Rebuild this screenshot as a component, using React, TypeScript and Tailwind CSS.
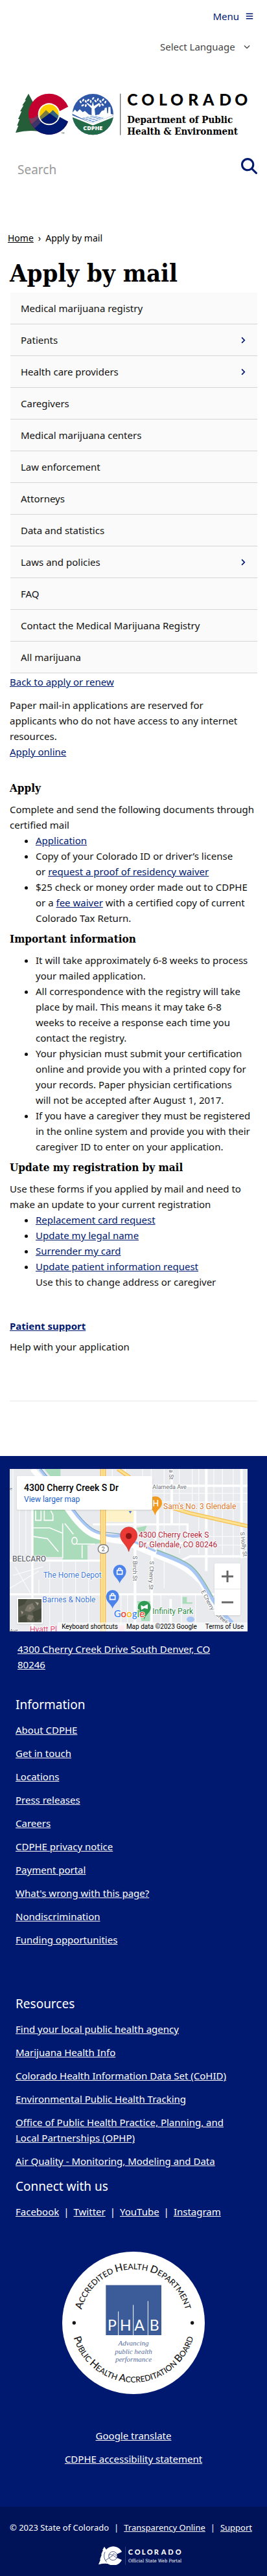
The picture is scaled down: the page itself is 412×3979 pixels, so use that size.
import React from "react";
import { FaBars, FaChevronRight } from "react-icons/fa";
import { FaChevronDown, FaMagnifyingGlass } from "react-icons/fa6";

const navItems: { label: string; more?: boolean }[] = [
  { label: "Medical marijuana registry" },
  { label: "Patients", more: true },
  { label: "Health care providers", more: true },
  { label: "Caregivers" },
  { label: "Medical marijuana centers" },
  { label: "Law enforcement" },
  { label: "Attorneys" },
  { label: "Data and statistics" },
  { label: "Laws and policies", more: true },
  { label: "FAQ" },
  { label: "Contact the Medical Marijuana Registry" },
  { label: "All marijuana" },
];

const information = [
  "About CDPHE",
  "Get in touch",
  "Locations",
  "Press releases",
  "Careers",
  "CDPHE privacy notice",
  "Payment portal",
  "What's wrong with this page?",
  "Nondiscrimination",
  "Funding opportunities",
];

const resources = [
  "Find your local public health agency",
  "Marijuana Health Info",
  "Colorado Health Information Data Set (CoHID)",
  "Environmental Public Health Tracking",
  "Office of Public Health Practice, Planning, and Local Partnerships (OPHP)",
  "Air Quality - Monitoring, Modeling and Data",
];

const social = ["Facebook", "Twitter", "YouTube", "Instagram"];

function Link({ children }: { children: React.ReactNode }) {
  return (
    <a href="#" className="text-[#001970] underline">
      {children}
    </a>
  );
}

function Heading({ children }: { children: React.ReactNode }) {
  return (
    <h2 className="font-['DejaVu_Serif_Condensed','DejaVu_Serif',serif] text-[17px] font-bold leading-6 text-black">
      {children}
    </h2>
  );
}

function StateLogo() {
  return (
    <svg viewBox="75 430 1092 198" className="block w-full" role="img" aria-label="Colorado Department of Public Health & Environment">
      <path d="M135 432 L118 462 L123 462 L106 486 L112 486 L96 514 L103 514 L87 550 L94 550 L82 580 L88 580 L75 613 Q130 600 178 606 L178 500 L160 470 L155 470 Z" fill="#245d38" />
      <circle cx="230" cy="527" r="95" fill="#c3002f" />
      <path d="M148 574 L190 536 L230 500 L325 540 L312 575 A95 95 0 0 1 162 593 Z" fill="#001970" />
      <path d="M136 545 L150 574 L192 536 L188 522 Q160 552 136 545 Z" fill="#7a3a5d" />
      <path d="M162 594 L192 566 L183 545 L148 574 Z" fill="#3f3468" />
      <path d="M254 526 L335 484 L335 570 Z" fill="#fff" />
      <circle cx="230" cy="527" r="51" fill="#fff" />
      <clipPath id="sun"><circle cx="230" cy="527" r="45" /></clipPath>
      <g clipPath="url(#sun)">
        <rect x="180" y="477" width="100" height="100" fill="#ffcd00" />
        <path d="M180 546 L216 508 L232 524 L220 560 H180 Z" fill="#7a7b3e" />
        <path d="M226 530 L248 508 L285 545 V560 H230 Z" fill="#35647e" />
        <path d="M180 562 L233 523 L285 560 V580 H180 Z" fill="#001970" />
      </g>
      <text x="287" y="620" fontSize="9" fontFamily="Lato, sans-serif" fill="#333">TM</text>

      <clipPath id="seal"><circle cx="433" cy="528" r="95" /></clipPath>
      <g clipPath="url(#seal)">
        <rect x="335" y="430" width="196" height="196" fill="#2f58a8" />
        <path d="M335 524 L350 506 L360 516 L372 504 L386 518 L396 512 L414 528 L427 532 L427 500 L404 478 L408 475 L428 489 L433 468 L438 489 L462 475 L466 480 L441 502 L444 532 L462 528 L474 512 L486 508 L488 498 L497 496 L499 522 L503 522 L505 494 L514 494 L516 526 L531 530 L433 572 Z" fill="#fff" />
        <path d="M335 531 L433 571 L531 531 L531 545 L433 583 L335 545 Z" fill="#fff" />
        <path d="M335 540 L433 579 L531 540 L531 626 L335 626 Z" fill="#236a49" />
        <path d="M382 545 L433 534 L484 545 L433 566 Z" fill="#7fa3d6" />
        <path d="M394 548 L445 537 M408 554 L460 541 M422 560 L474 545 M394 542 L446 560 M412 538 L462 554" stroke="#fff" strokeWidth="3" fill="none" />
        {[
          [376, 470, -30], [388, 462, 30], [400, 468, -20], [386, 486, 60], [400, 487, 10], [411, 462, 50],
          [423, 468, 0], [434, 454, 40], [445, 466, -40], [456, 459, 20], [468, 468, -30], [480, 460, 40],
          [491, 471, 20], [478, 483, -50], [465, 487, 20],
        ].map(([x, y, r]) => (
          <ellipse key={`${x}-${y}`} cx={x} cy={y} rx="4" ry="7" fill="#fff" transform={`rotate(${r} ${x} ${y})`} />
        ))}
      </g>
      <text x="433" y="602" textAnchor="middle" fontSize="27" fontWeight="800" fontFamily="Open Sans, sans-serif" fill="#fff">CDPHE</text>
      <rect x="558" y="432" width="4" height="192" fill="#6d6e71" />
      <text x="592 658 738 792 874 942 1018 1090" y="486" fontSize="74" fontWeight="900" fontFamily="Lato, sans-serif" fill="#000">COLORADO</text>
      <g fontFamily="DejaVu Serif Condensed, DejaVu Serif, serif" fontWeight="700" fontSize="45" fill="#000">
        <text x="592" y="567">Department of Public</text>
        <text x="592" y="622">Health &amp; Environment</text>
      </g>
    </svg>
  );
}

function Pin({ x, y, fill }: { x: number; y: number; fill: string }) {
  return (
    <g transform={`translate(${x} ${y})`}>
      <path d="M0 54 C-5 34 -30 24 -30 -2 A30 30 0 0 1 30 -2 C30 24 5 34 0 54 Z" fill={fill} />
      <path d="M-12 -6 H12 V12 H-12 Z M-6 -6 V-10 A6 6 0 0 1 6 -10 V-6" fill="none" stroke="#fff" strokeWidth="5" />
    </g>
  );
}

function MapDrawing() {
  return (
    <svg viewBox="45 87 1101 753" preserveAspectRatio="xMidYMid slice" className="block h-[251px] w-full" aria-hidden="true" fontFamily="Roboto, sans-serif">
      <rect x="45" y="87" width="1101" height="753" fill="#e8eaed" />
      <path d="M150 270 H310 L420 390 L470 420 L470 430 L405 440 L405 512 H290 V495 H150 Z M205 87 H280 V130 H240 Z" fill="#aadcbb" />
      <path d="M635 700 H698 V792 H655 Z M845 680 H865 V705 H890 V712 H845 Z M630 360 L680 350 L660 400 Z" fill="#aadcbb" />
      <path d="M495 270 H620 V332 H480 Z" fill="#fef3c8" />
      <g stroke="#fff" fill="none" strokeWidth="4">
        <path d="M60 87 V480 M90 270 V480 M120 270 V480 M60 580 L200 540 M45 640 L180 560 M70 540 L140 660 M180 600 V670 M230 520 V670 M290 512 V670 M350 512 V668 M410 512 V668 M230 670 V840 M290 670 V840 M350 670 V800 M410 680 V840 M520 87 V130 M580 87 V120 M660 87 V130 M700 87 V130 M760 87 V640 M830 87 V480 M890 87 V260 M920 87 V480 M990 87 V480 M1030 87 V480 M1080 87 V500 M700 200 H1146 M700 240 H1146 M860 400 H1146 M870 440 H1146 M560 670 V840 M590 670 V840 M745 670 V830 M840 670 V830 M905 670 V830" strokeOpacity=".75" />
        <path d="M45 512 H470 M45 668 H1000 M430 344 H868 V430 H640 M700 165 H1146 M720 390 L720 480 M820 520 L880 492 H1146 M150 270 V840" strokeWidth="10" />
        <path d="M625 280 V840 M705 460 L700 840 M790 690 V840 M955 87 V560 M1118 87 V500 M795 87 V340 M730 260 V400" strokeWidth="12" />
        <path d="M165 280 V325 H190 V280 M205 280 V325 H245 V300 L235 280 M155 360 H230 L290 385 M155 400 L220 410 L270 470 M290 340 V500 M300 340 L340 390 M345 420 m-12 0 a12 16 0 1 0 24 0 a12 16 0 1 0 -24 0 M355 435 H440 M380 440 V500" strokeWidth="5" />
      </g>
      <path d="M185 87 L320 255 Q390 350 440 378 T560 395 L640 435 L720 470" stroke="#a8c7f5" strokeWidth="14" fill="none" />
      <path d="M150 87 L310 270 Q380 375 440 397 T580 425 Q700 480 780 510 T930 610 Q980 700 1010 760" stroke="#fff" strokeWidth="24" fill="none" />
      <path d="M190 87 L330 255 Q400 360 460 378 L560 388" stroke="#6f9bb0" strokeWidth="3" fill="none" />
      <path d="M725 472 Q830 510 870 535 T960 650 T1075 800" stroke="#a8c7f5" strokeWidth="18" fill="none" />
      <path d="M725 462 Q850 505 890 540 T985 680" stroke="#86b89a" strokeWidth="4" fill="none" />
      <path d="M477 87 V840" stroke="#f5be52" strokeWidth="26" />
      <path d="M477 87 V840" stroke="#fde293" strokeWidth="18" />
      <path d="M477 87 V840" stroke="#f5be52" strokeWidth="2" />
      <path d="M545 87 L600 125 M780 262 L880 292 L1146 352" stroke="#f5be52" strokeWidth="18" fill="none" />
      <path d="M545 87 L600 125 M780 262 L880 292 L1146 352" stroke="#fde293" strokeWidth="10" fill="none" />
      <path d="M545 812 H575 V840 H545 Z" fill="#fbd0dc" />
      <ellipse cx="882" cy="784" rx="18" ry="13" fill="#a8c7f5" />
      <rect x="454" y="438" width="48" height="40" rx="20" fill="#fff" stroke="#777" strokeWidth="4" />
      <text x="478" y="468" fontSize="27" textAnchor="middle" fill="#666">2</text>
      <g stroke="#fff" strokeWidth="6" paintOrder="stroke" strokeLinejoin="round">
        <text x="57" y="515" fontSize="36" fontWeight="500" fill="#6b6f76">BELCARO</text>
        <text x="706" y="181" fontSize="27" fill="#6b6f76">Alameda Ave</text>
        <text x="756" y="273" fontSize="36" fill="#d9782d">Sam's No. 3 Glendale</text>
        <text x="642" y="406" fontSize="36" fill="#b3263a">4300 Cherry Creek S</text>
        <text x="642" y="449" fontSize="36" fill="#b3263a">Dr, Glendale, CO 80246</text>
        <text x="200" y="590" fontSize="36" fill="#4479d4">The Home Depot</text>
        <text x="196" y="706" fontSize="36" fill="#4479d4">Barnes &amp; Noble</text>
        <text x="706" y="759" fontSize="36" fill="#2f8a4c">Infinity Park</text>
        <text x="138" y="843" fontSize="36" fill="#d84a78">Hyatt Pl</text>
        <text x="45" y="843" fontSize="24" fill="#6b6f76">Ave</text>
        <text x="45" y="187" fontSize="24" fill="#6b6f76">e</text>
        <text transform="translate(616 490) rotate(90)" fontSize="27" fill="#6b6f76">S Birch St</text>
        <text transform="translate(694 514) rotate(92)" fontSize="27" fill="#6b6f76">S Cherry St</text>
        <text transform="translate(1112 380) rotate(83)" fontSize="27" fill="#6b6f76">S Holly St</text>
        <text transform="translate(783 90) rotate(90)" fontSize="27" fill="#6b6f76">a St</text>
        <text transform="translate(930 655) rotate(62)" fontSize="27" fill="#6b6f76">E Cherry</text>
        <text transform="translate(996 762) rotate(42)" fontSize="27" fill="#6b6f76">Creek</text>
      </g>
      <path d="M596 282 H610 L603 294 Z" fill="#4479d4" />
      <g>
        <path d="M718 302 C712 275 688 268 688 245 A30 30 0 0 1 750 245 C750 268 724 275 718 302 Z" fill="#f29a1f" />
        <path d="M712 232 V260 M730 230 V260 M712 246 H730" stroke="#fff" strokeWidth="5" />
      </g>
      <path d="M596 470 C590 440 557 425 557 395 A39 39 0 0 1 635 395 C635 425 602 440 596 470 Z" fill="#ea3a35" stroke="#c22a25" strokeWidth="2" />
      <circle cx="596" cy="398" r="14" fill="#8f1414" />
      <Pin x={554} y={563} fill="#4b83ea" />
      <Pin x={521} y={680} fill="#4b83ea" />
      <path d="M668 785 C664 760 638 755 638 728 A30 30 0 0 1 698 728 C698 755 672 760 668 785 Z" fill="#2f9a52" />
      <path d="M652 718 L664 724 L684 714 V736 L668 732 L654 740 Z" fill="#fff" />
      <g fontFamily="Lato, sans-serif" fontWeight="600" fontSize="45" stroke="#fff" strokeWidth="5" paintOrder="stroke">
        <text x="527" y="775"><tspan fill="#4285f4">G</tspan><tspan fill="#ea4335">o</tspan><tspan fill="#fbbc05">o</tspan><tspan fill="#4285f4">g</tspan><tspan fill="#34a853">l</tspan><tspan fill="#ea4335">e</tspan></text>
      </g>
    </svg>
  );
}

function MapEmbed() {
  return (
    <div className="relative h-[251px] w-full overflow-hidden font-['Roboto',sans-serif]">
      <MapDrawing />
      <div className="absolute left-[11px] top-[11px] w-[209px] rounded-xs bg-white px-[11px] py-2 shadow-sm">
        <p className="text-[14px] font-medium leading-5 text-black">4300 Cherry Creek S Dr</p>
        <a href="#" className="block text-[12px] leading-4 text-[#1a62c8]">View larger map</a>
      </div>
      <button aria-label="Show satellite imagery" className="absolute bottom-[12px] left-[11px] size-10 border-2 border-white bg-[#5b5c50] shadow">
        <svg viewBox="0 0 36 36" className="block size-full" aria-hidden="true">
          <path d="M0 0 H14 L10 8 L0 12 Z M22 20 L36 14 V30 L26 36 Z M2 28 L12 24 L14 36 H2 Z" fill="#454a3d" />
          <path d="M14 10 L22 6 L26 14 L18 20 L10 18 Z M16 24 L24 26 L20 34 L14 30 Z" fill="#7d7869" />
          <path d="M26 4 L32 6 L30 10 Z M4 18 L8 20 L6 24 Z M18 12 L20 14 L17 16 Z" fill="#a39c8b" />
        </svg>
      </button>
      <div className="absolute right-[11px] top-[146px] flex w-10 flex-col divide-y divide-gray-200 rounded-xs bg-white shadow">
        <button aria-label="Zoom in" className="grid h-10 place-items-center">
          <svg viewBox="0 0 18 18" className="size-[18px]" aria-hidden="true"><path d="M9 0 V18 M0 9 H18" stroke="#666" strokeWidth="3" /></svg>
        </button>
        <button aria-label="Zoom out" className="grid h-10 place-items-center">
          <svg viewBox="0 0 18 18" className="size-[18px]" aria-hidden="true"><path d="M0 9 H18" stroke="#666" strokeWidth="3" /></svg>
        </button>
      </div>
      <div className="absolute bottom-0 right-0 flex gap-[13px] bg-white/60 px-[6px] text-[10px] leading-[14px] text-black">
        <button>Keyboard shortcuts</button>
        <span>Map data ©2023 Google</span>
        <a href="#">Terms of Use</a>
      </div>
    </div>
  );
}

function AccreditationSeal() {
  return (
    <svg viewBox="288 113 660 660" className="block size-[220px]" role="img" aria-label="Public Health Accreditation Board">
      <circle cx="618" cy="443" r="330" fill="#fff" />
      <path id="top-arc" d="M370 443 A248 248 0 0 1 866 443" fill="none" />
      <path id="bottom-arc" d="M329 430 A289 289 0 0 0 907 430" fill="none" />
      <g fontFamily="Lato, sans-serif" fontWeight="500" fill="#151515" fontSize="37" textAnchor="middle">
        <text>
          <textPath href="#top-arc" startOffset="50%">
            <tspan fontSize="47">A</tspan>CCREDITED <tspan fontSize="47">H</tspan>EALTH <tspan fontSize="47">D</tspan>EPARTMENT
          </textPath>
        </text>
        <text>
          <textPath href="#bottom-arc" startOffset="50%">
            <tspan fontSize="47">P</tspan>UBLIC <tspan fontSize="47">H</tspan>EALTH <tspan fontSize="47">A</tspan>CCREDITATION <tspan fontSize="47">B</tspan>OARD
          </textPath>
        </text>
      </g>
      <circle cx="343" cy="443" r="8" fill="#151515" />
      <circle cx="890" cy="443" r="8" fill="#151515" />
      <rect x="490" y="268" width="257" height="232" fill="#3b5c98" />
      <path d="M548 390 V500 M617 360 V500 M685 342 V500" stroke="#fff" strokeWidth="3" />
      <text x="498 555 622 692" y="479" fontFamily="Lato, sans-serif" fontSize="69" fill="#fff">PHAB</text>
      <g fontFamily="Liberation Serif, serif" fontStyle="italic" fontSize="33" fill="#5a6f9e" textAnchor="middle">
        <text x="618" y="547">Advancing</text>
        <text x="618" y="586">public health</text>
        <text x="618" y="624">performance</text>
      </g>
    </svg>
  );
}

function PortalLogo() {
  return (
    <svg viewBox="458 696 408 88" className="block w-[136px]" role="img" aria-label="Colorado Official State Web Portal">
      <path d="M485 698 L476 714 L479 714 L470 734 L473 734 L464 758 L467 758 L458 781 Q485 774 505 778 L505 720 L494 712 Z" fill="#fff" />
      <path d="M525 741 L566 722 A44 44 0 1 0 566 760 Z" fill="#fff" />
      <circle cx="525" cy="741" r="20" fill="#fff" />
      <path d="M488 722 A44 44 0 0 0 496 770 M525 741 m-20 0 a20 20 0 1 0 40 0 a20 20 0 1 0 -40 0 M490 762 L526 738 L544 752 M506 738 L514 732 L520 738 L530 730 L542 742" stroke="#001359" strokeWidth="2" fill="none" />
      <rect x="583" y="698" width="1" height="84" fill="#8d97bd" />
      <text x="595 625 658 682 715 748 780 814" y="735" fontFamily="Lato, sans-serif" fontWeight="900" fontSize="33" fill="#fff">COLORADO</text>
      <text x="596" y="770" fontFamily="DejaVu Serif Condensed, DejaVu Serif, serif" fontSize="22" fill="#fff">Official State Web Portal</text>
    </svg>
  );
}

function FooterLinks({ title, items }: { title: string; items: string[] }) {
  return (
    <section>
      <h2 className="text-[19px] leading-6">{title}</h2>
      <ul className="mt-[15px] space-y-3 pr-5">
        {items.map((item) => (
          <li key={item}>
            <a href="#" className="underline">{item}</a>
          </li>
        ))}
      </ul>
    </section>
  );
}

export default function App() {
  return (
    <div className="bg-white font-['Noto_Sans',sans-serif] text-[15px] leading-6 text-[#111]">
      <header className="pt-[13px]">
        <div className="flex justify-end pr-[21px]">
          <button className="flex items-center gap-[10px] text-[#001970]">
            Menu <FaBars className="size-3" />
          </button>
        </div>
        <div className="mt-[23px] flex justify-end pr-[21px]">
          <div className="relative flex items-center">
            <select aria-label="Select Language" className="appearance-none bg-transparent pr-7 text-[#444]">
              <option>Select Language</option>
            </select>
            <FaChevronDown className="pointer-events-none absolute right-[5px] size-[10px] text-[#444]" />
          </div>
        </div>
        <a href="#" className="mx-6 mt-[60px] block">
          <StateLogo />
        </a>
        <form className="mt-[34px] flex items-start justify-between pl-[27px] pr-[15px]" role="search">
          <input type="text" aria-label="Search" placeholder="Search" className="h-9 min-w-0 flex-1 text-[19px] text-black outline-none placeholder:text-[#999]" />
          <button type="button" aria-label="Search" className="text-[#001970]">
            <FaMagnifyingGlass className="size-[25px]" />
          </button>
        </form>
      </header>

      <main className="px-[15px]">
        <nav aria-label="Breadcrumb" className="-ml-[3px] mt-[76px] text-[14px] text-black">
          <a href="#" className="underline">Home</a>
          <span className="mx-[7px]">›</span>
          <span>Apply by mail</span>
        </nav>
        <h1 className="mt-[18px] font-['DejaVu_Serif_Condensed','DejaVu_Serif',serif] text-[38px] font-bold leading-[48px] text-black">
          Apply by mail
        </h1>
        <nav aria-label="Section" className="ml-px mt-[6px] bg-[#fafafa]">
          <ul>
            {navItems.map(({ label, more }) => (
              <li key={label} className="flex h-[49px] items-center justify-between border-b border-[#d4d4d4] px-4">
                <a href="#">{label}</a>
                {more && (
                  <button aria-label={`Expand ${label}`} className="text-[#001970]">
                    <FaChevronRight className="size-[11px]" />
                  </button>
                )}
              </li>
            ))}
          </ul>
        </nav>

        <p className="pt-px"><Link>Back to apply or renew</Link></p>
        <p className="mt-3 pr-2">Paper mail-in applications are reserved for applicants who do not have access to any internet resources.</p>
        <p><Link>Apply online</Link></p>

        <section className="mt-8">
          <Heading>Apply</Heading>
          <p className="mt-[9px]">Complete and send the following documents through certified mail</p>
          <ul className="list-disc pl-10">
            <li><Link>Application</Link></li>
            <li>Copy of your Colorado ID or driver’s license or&nbsp;<Link>request a proof of residency waiver</Link></li>
            <li>$25 check or money order made out to CDPHE or a <Link>fee waiver</Link> with a certified copy of current Colorado Tax Return.</li>
          </ul>
        </section>

        <section className="mt-2">
          <Heading>Important information</Heading>
          <ul className="mt-[9px] list-disc pl-10">
            <li>It will take approximately 6-8 weeks to process your mailed application.</li>
            <li>All correspondence with the registry will take place by mail. This means it may take 6-8 weeks&nbsp;to receive a response each time you contact the registry.</li>
            <li>Your physician must submit your certification online and provide you with a printed copy for your records. Paper physician certifications will&nbsp;not be accepted after August 1, 2017.</li>
            <li>If you have a caregiver they must be registered in the online system and provide you with their caregiver ID to enter on your application.</li>
          </ul>
        </section>

        <section className="mt-2">
          <Heading>Update my registration by mail</Heading>
          <p className="mt-[9px]">Use these forms if you applied by mail and need to make an update to your current registration</p>
          <ul className="list-disc pl-10">
            <li><Link>Replacement card request</Link></li>
            <li><Link>Update my legal name</Link></li>
            <li><Link>Surrender my card</Link></li>
            <li><Link>Update patient information request</Link><br />Use this to change address or caregiver</li>
          </ul>
        </section>

        <p className="mt-[44px] font-bold"><Link>Patient support</Link></p>
        <p className="mt-2">Help with your application</p>
        <hr className="mt-[71px] border-t-2 border-[#f3f3f3]" />
      </main>

      <footer className="mt-[84px] bg-[#001970] text-white">
        <div className="pt-5">
          <div className="pl-[15px] pr-[30px]">
            <MapEmbed />
          </div>
          <p className="mt-[15px] pl-[27px] pr-12">
            <a href="#" className="underline">4300 Cherry Creek Drive South Denver, CO 80246</a>
          </p>
          <div className="mt-[38px] px-6">
            <FooterLinks title="Information" items={information} />
            <div className="mt-[75px]">
              <FooterLinks title="Resources" items={resources} />
            </div>
            <section className="mt-[15px]">
              <h2 className="text-[19px] leading-6">Connect with us</h2>
              <p className="mt-[15px]">
                {social.map((name, i) => (
                  <React.Fragment key={name}>
                    {i > 0 && <span className="mx-[7px]">|</span>}
                    <a href="#" className="underline">{name}</a>
                  </React.Fragment>
                ))}
              </p>
            </section>
          </div>
          <div className="mt-[50px] flex flex-col items-center">
            <AccreditationSeal />
            <a href="#" className="mt-[52px] underline">Google translate</a>
            <a href="#" className="mt-3 underline">CDPHE accessibility statement</a>
          </div>
        </div>
        <div className="mt-[62px] flex flex-col items-center bg-[#001359] pb-[17px] pt-5">
          <p className="pr-2 text-[13px] leading-6">
            © 2023 State of Colorado
            <span className="mx-2">|</span>
            <a href="#" className="underline">Transparency Online</a>
            <span className="mx-2">|</span>
            <a href="#" className="underline">Support</a>
          </p>
          <div className="mt-[17px] pl-7">
            <PortalLogo />
          </div>
        </div>
      </footer>
    </div>
  );
}
